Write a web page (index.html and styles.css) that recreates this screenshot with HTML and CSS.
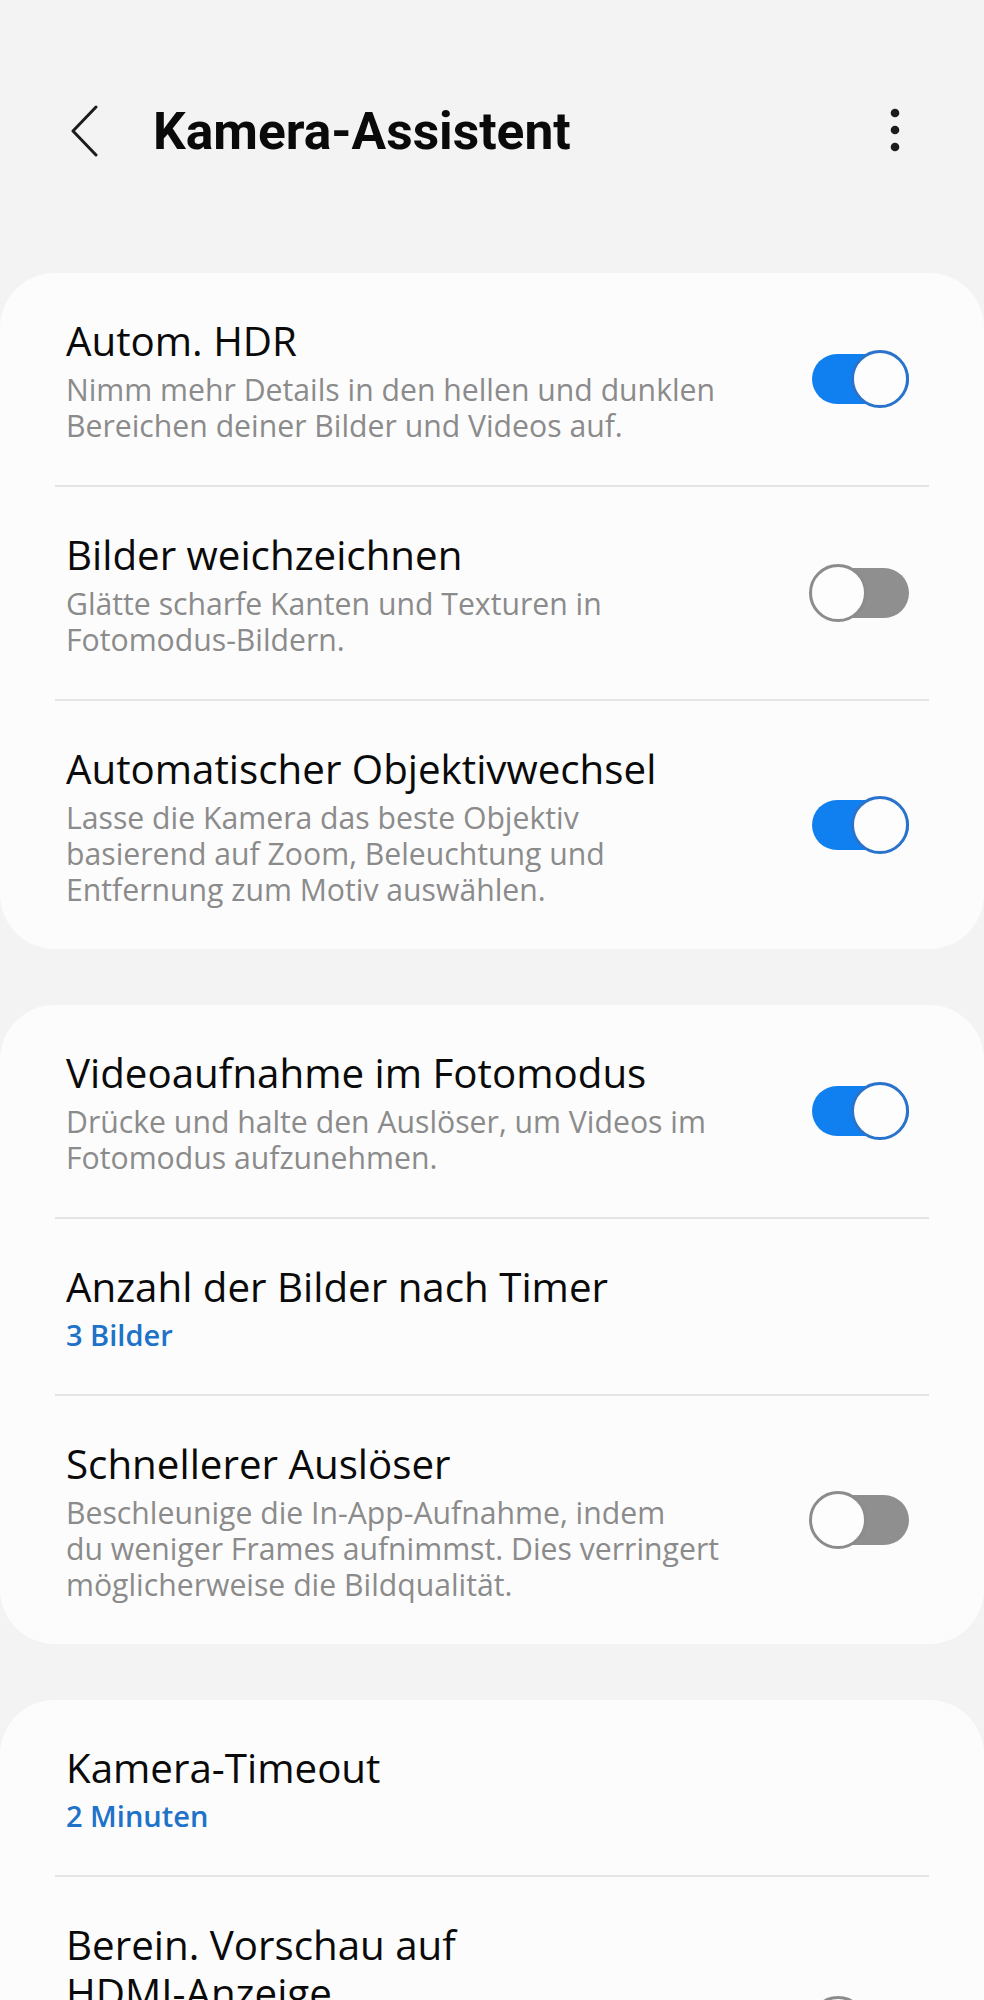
FILE: index.html
```html
<!DOCTYPE html>
<html lang="de">
<head>
<meta charset="UTF-8" />
<meta name="viewport" content="width=device-width, initial-scale=1" />
<title>Kamera-Assistent</title>
<link rel="stylesheet" href="styles.css">
</head>
<body>
  <header class="app-bar">
    <button class="icon-btn back" aria-label="Zurück">
      <svg width="28" height="52" viewBox="0 0 28 52"><path d="M26 2 L3 26 L26 50" fill="none" stroke="#1c1c1c" stroke-width="3" stroke-linecap="round" stroke-linejoin="round"/></svg>
    </button>
    <h1 class="title">Kamera-Assistent</h1>
    <button class="icon-btn more" aria-label="Weitere Optionen">
      <svg width="10" height="46" viewBox="0 0 10 46"><circle cx="5" cy="5" r="4.3" fill="#1c1c1c"/><circle cx="5" cy="22" r="4.3" fill="#1c1c1c"/><circle cx="5" cy="39" r="4.3" fill="#1c1c1c"/></svg>
    </button>
  </header>

  <main class="settings">
    <section class="card">
      <div class="row">
        <div class="text">
          <div class="row-title">Autom. HDR</div>
          <div class="row-sub">Nimm mehr Details in den hellen und dunklen<br>Bereichen deiner Bilder und Videos auf.</div>
        </div>
        <span class="switch on"></span>
      </div>
      <div class="row">
        <div class="text">
          <div class="row-title">Bilder weichzeichnen</div>
          <div class="row-sub">Glätte scharfe Kanten und Texturen in<br>Fotomodus-Bildern.</div>
        </div>
        <span class="switch"></span>
      </div>
      <div class="row">
        <div class="text">
          <div class="row-title">Automatischer Objektivwechsel</div>
          <div class="row-sub">Lasse die Kamera das beste Objektiv<br>basierend auf Zoom, Beleuchtung und<br>Entfernung zum Motiv auswählen.</div>
        </div>
        <span class="switch on"></span>
      </div>
    </section>

    <section class="card">
      <div class="row">
        <div class="text">
          <div class="row-title">Videoaufnahme im Fotomodus</div>
          <div class="row-sub">Drücke und halte den Auslöser, um Videos im<br>Fotomodus aufzunehmen.</div>
        </div>
        <span class="switch on"></span>
      </div>
      <div class="row">
        <div class="text">
          <div class="row-title">Anzahl der Bilder nach Timer</div>
          <div class="row-value">3 Bilder</div>
        </div>
      </div>
      <div class="row">
        <div class="text">
          <div class="row-title">Schnellerer Auslöser</div>
          <div class="row-sub">Beschleunige die In-App-Aufnahme, indem<br>du weniger Frames aufnimmst. Dies verringert<br>möglicherweise die Bildqualität.</div>
        </div>
        <span class="switch"></span>
      </div>
    </section>

    <section class="card">
      <div class="row">
        <div class="text">
          <div class="row-title">Kamera-Timeout</div>
          <div class="row-value">2 Minuten</div>
        </div>
      </div>
      <div class="row">
        <div class="text tall">
          <div class="row-title">Berein. Vorschau auf<br>HDMI-Anzeige</div>
        </div>
        <span class="switch"></span>
      </div>
    </section>
  </main>
</body>
</html>
```

FILE: styles.css
```css
body {
  margin: 0;
  background: #f3f3f3;
  font-family: "Open Sans", "Noto Sans", sans-serif;
  color: #0a0a0a;
}
.app-bar {
  display: flex;
  align-items: center;
  height: 102px;
  padding: 80px 69px 0 70px;
}
.icon-btn {
  display: flex;
  align-items: center;
  justify-content: center;
  border: none;
  background: none;
  padding: 0;
}
.back {
  width: 28px;
  height: 52px;
}
.title {
  flex: 1;
  margin: 0 0 0 55px;
  font-family: Roboto, sans-serif;
  font-size: 51.5px;
  font-weight: 700;
}
.more {
  width: 40px;
  height: 52px;
}
.settings {
  display: flex;
  flex-direction: column;
  gap: 56px;
  margin-top: 91px;
}
.card {
  background: #fcfcfc;
  border-radius: 55px;
}
.row {
  display: flex;
  align-items: center;
  margin: 0 55px;
  padding: 0 19px 0 11px;
}
.row + .row {
  border-top: 2px solid #e4e4e4;
}
.text {
  flex: 1;
  padding: 44px 0 41px;
}
/* last row is cut off by the screen, keep its toggle where it sits */
.text.tall {
  min-height: 211px;
}
.row-title {
  font-size: 40.3px;
  line-height: 48px;
}
.row-sub {
  margin-top: 7px;
  font-size: 30.2px;
  line-height: 36px;
  font-weight: 500;
  color: #8b8b8b;
}
.row-value {
  margin-top: 6px;
  font-size: 29px;
  line-height: 36px;
  font-weight: 600;
  color: #2072c9;
}
.switch {
  position: relative;
  flex: none;
  width: 101px;
  height: 58px;
  margin-left: 40px;
}
.switch::before {
  content: "";
  position: absolute;
  left: 3px;
  right: 1px;
  top: 4px;
  height: 50px;
  border-radius: 25px;
  background: #8f8f8f;
}
.switch::after {
  content: "";
  position: absolute;
  left: 0;
  top: 0;
  width: 52px;
  height: 52px;
  border: 3px solid #8c8c8c;
  border-radius: 50%;
  background: #fdfdfd;
}
.switch.on::before {
  background: #1080f0;
}
.switch.on::after {
  left: auto;
  right: 1px;
  border-color: #2a73cc;
}
```
